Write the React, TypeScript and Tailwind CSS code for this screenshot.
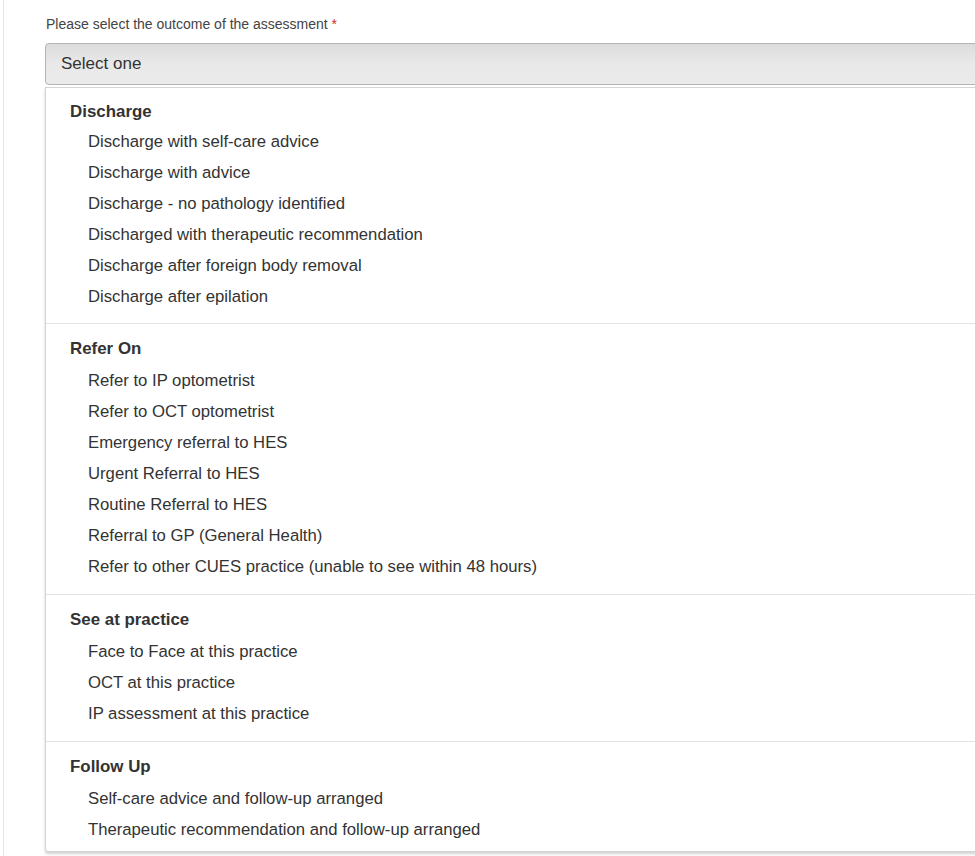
import React from "react";

type Group = { title: string; items: string[] };

const groups: Group[] = [
  {
    title: "Discharge",
    items: [
      "Discharge with self-care advice",
      "Discharge with advice",
      "Discharge - no pathology identified",
      "Discharged with therapeutic recommendation",
      "Discharge after foreign body removal",
      "Discharge after epilation",
    ],
  },
  {
    title: "Refer On",
    items: [
      "Refer to IP optometrist",
      "Refer to OCT optometrist",
      "Emergency referral to HES",
      "Urgent Referral to HES",
      "Routine Referral to HES",
      "Referral to GP (General Health)",
      "Refer to other CUES practice (unable to see within 48 hours)",
    ],
  },
  {
    title: "See at practice",
    items: [
      "Face to Face at this practice",
      "OCT at this practice",
      "IP assessment at this practice",
    ],
  },
  {
    title: "Follow Up",
    items: [
      "Self-care advice and follow-up arranged",
      "Therapeutic recommendation and follow-up arranged",
    ],
  },
];

export default function App() {
  return (
    <div
      className="h-[856px] w-[975px] overflow-hidden bg-white text-[#333]"
      style={{ fontFamily: '"Liberation Sans", Arial, sans-serif' }}
    >
      <div className="ml-[3px] h-full border-l border-[#e6e6e6] pl-[41px] pt-[16px]">
        <div className="pl-[1px] text-[14px] leading-[16px] text-[#444]">
          Please select the outcome of the assessment{" "}
          <span className="text-[#c9302c]">*</span>
        </div>
        <div className="mt-[11px] flex h-[42px] w-[1000px] items-center rounded-l-[4px] border border-[#b3b3b3] bg-gradient-to-b from-[#dcdcdc] via-[#e9e9e9] to-[#ebebeb] pl-[15px] text-[17px]">
          Select one
        </div>
        <div className="mt-[2px] w-[1000px] rounded-bl-[3px] border-b border-l border-t border-[#d4d4d4] bg-white shadow-[0_2px_3px_rgba(0,0,0,0.18)]">
          {groups.map((g, gi) => {
            const first = gi === 0;
            const last = gi === groups.length - 1;
            return (
              <div
                key={g.title}
                className={
                  first
                    ? "pb-[11px] pt-[9px]"
                    : last
                      ? "border-t border-[#e3e3e3] pb-[6px] pt-[10px]"
                      : "border-t border-[#e3e3e3] pb-[12px] pt-[10px]"
                }
              >
                <div
                  className={
                    first
                      ? "h-[29px] pl-[24px] text-[16.9px] font-bold leading-[29px]"
                      : "h-[31px] pl-[24px] text-[16.9px] font-bold leading-[30px]"
                  }
                >
                  {g.title}
                </div>
                {g.items.map((it) => (
                  <div
                    key={it}
                    className="h-[31px] pl-[42px] text-[16.7px] leading-[31px]"
                  >
                    {it}
                  </div>
                ))}
              </div>
            );
          })}
        </div>
      </div>
    </div>
  );
}
